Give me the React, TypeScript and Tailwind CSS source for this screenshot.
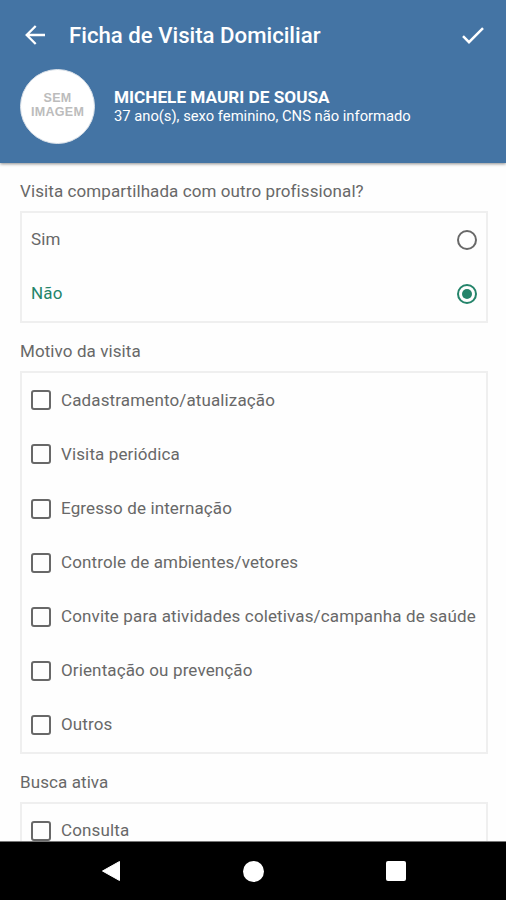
type RadioOptionProps = {
  label: string
  checked?: boolean
}

const motivos = [
  "Cadastramento/atualização",
  "Visita periódica",
  "Egresso de internação",
  "Controle de ambientes/vetores",
  "Convite para atividades coletivas/campanha de saúde",
  "Orientação ou prevenção",
  "Outros",
]

function Header() {
  return (
    <header className="relative h-[162.5px] shrink-0 bg-[#4474a4] pt-3 text-white shadow-[0_1px_3px_rgba(0,0,0,0.45)]">
      <div className="flex h-[46px] items-center pl-[25px] pr-[22px]">
        <svg className="h-5 w-5" viewBox="0 0 20 20" fill="none" stroke="currentColor" strokeWidth="2.3">
          <path d="M20 10H2M10.7 1L1.7 10l9 9" />
        </svg>
        <h1 className="ml-6 flex-1 pb-px text-[22.2px] leading-[44px] font-medium whitespace-nowrap">Ficha de Visita Domiciliar</h1>
        <svg className="h-[17px] w-[22px]" viewBox="0 0 22 17" fill="none" stroke="currentColor" strokeWidth="2.5">
          <path d="M1 9.2l6 6L21 1.2" />
        </svg>
      </div>
      <div className="mt-[11px] flex items-start pl-5">
        <div className="flex h-[75px] w-[75px] items-center justify-center rounded-full border border-[#d9e0e8] bg-white pb-[3px] text-center font-['Liberation_Sans'] text-[12.5px] leading-[14px] font-bold tracking-[0.3px] text-[#bcbcbc]">
          SEM
          <br />
          IMAGEM
        </div>
        <div className="ml-[19px] pt-[18px] whitespace-nowrap">
          <p className="text-[17.2px] leading-5 font-bold">MICHELE MAURI DE SOUSA</p>
          <p className="text-[14.75px] leading-[19px]">37 ano(s), sexo feminino, CNS não informado</p>
        </div>
      </div>
    </header>
  )
}

function RadioOption({ label, checked }: RadioOptionProps) {
  return (
    <div className={`flex h-[54.15px] items-center justify-between px-[9px] ${checked ? "text-[#24846a]" : "text-[#686868]"}`}>
      <span className="text-[17px] tracking-[0.16px]">{label}</span>
      <span className="flex h-5 w-5 items-center justify-center rounded-full border-2 border-current">
        {checked && <span className="h-[10px] w-[10px] rounded-full bg-current" />}
      </span>
    </div>
  )
}

function CheckOption({ label }: { label: string }) {
  return (
    <div className="flex h-[54.15px] shrink-0 items-center pl-[9px]">
      <span className="h-5 w-5 rounded-[3px] border-2 border-[#686868]" />
      <span className="ml-[10px] text-[17px] tracking-[0.13px] whitespace-nowrap">{label}</span>
    </div>
  )
}

function SectionTitle({ children }: { children: string }) {
  return <h2 className="text-[17px] leading-5 tracking-[0.09px]">{children}</h2>
}

function NavBar() {
  return (
    <nav className="flex h-[59px] shrink-0 items-center border-t border-[#777] bg-black pl-[101px] text-white">
      <svg className="h-[22px] w-5" viewBox="0 0 20 22" fill="currentColor" stroke="currentColor" strokeLinejoin="round">
        <path d="M18.5 1.5v19L1.5 11z" />
      </svg>
      <span className="ml-[122px] h-[21px] w-[21px] rounded-full bg-white" />
      <span className="ml-[122px] h-5 w-5 rounded-[2px] bg-white" />
    </nav>
  )
}

export default function App() {
  return (
    <div className="flex h-[900px] w-[506px] flex-col overflow-hidden bg-[#fefefe] font-[Roboto,sans-serif] text-[#686868]">
      <Header />
      <main className="min-h-0 flex-1 overflow-hidden px-5 pt-[18.5px]">
        <SectionTitle>Visita compartilhada com outro profissional?</SectionTitle>
        <div className="mt-[10px] h-[112px] w-[468px] border-2 border-[#efefef]">
          <RadioOption label="Sim" />
          <RadioOption label="Não" checked />
        </div>
        <div className="mt-[18px]">
          <SectionTitle>Motivo da visita</SectionTitle>
        </div>
        <div className="mt-[10px] h-[383px] w-[468px] border-2 border-[#efefef] pt-[0.2px]">
          {motivos.map((motivo) => (
            <CheckOption key={motivo} label={motivo} />
          ))}
        </div>
        <div className="mt-[18px]">
          <SectionTitle>Busca ativa</SectionTitle>
        </div>
        <div className="mt-[10px] h-[382px] w-[468px] border-2 border-[#efefef]">
          <CheckOption label="Consulta" />
        </div>
      </main>
      <NavBar />
    </div>
  )
}
